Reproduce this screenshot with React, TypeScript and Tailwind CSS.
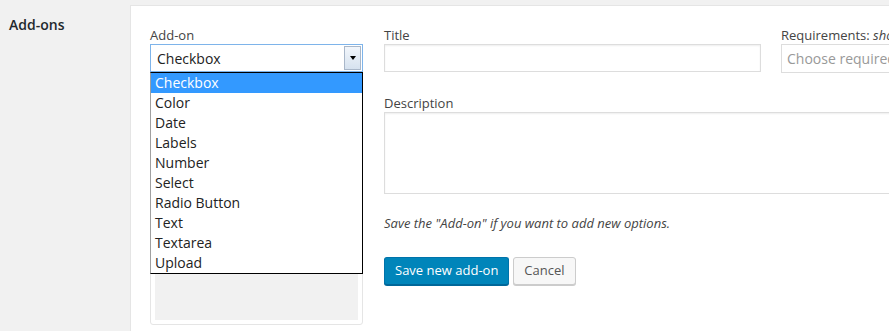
import { useState } from "react";

const addonTypes = [
  "Checkbox",
  "Color",
  "Date",
  "Labels",
  "Number",
  "Select",
  "Radio Button",
  "Text",
  "Textarea",
  "Upload",
];

export default function App() {
  const [selected, setSelected] = useState("Checkbox");

  return (
    <div className="w-[889px] h-[331px] overflow-hidden bg-[#f1f1f1] font-['Open_Sans',sans-serif] text-[13px] text-[#444]">
      <div className="flex h-full">
        {/* Section heading */}
        <div className="w-[130px] shrink-0 pl-[9px] pt-[15px]">
          <h2 className="text-[14px] font-semibold text-[#23282d] leading-[20px]">Add-ons</h2>
        </div>

        {/* Panel */}
        <div className="mt-[5px] w-[1000px] shrink-0 bg-white border-t border-l border-[#e5e5e5] pl-[19px] pt-[20px] flex gap-[21px]">
          {/* Add-on type column */}
          <div className="w-[213px] shrink-0 flex flex-col">
            <label className="leading-[18px] h-[18px]">Add-on</label>
            <div className="relative">
              <div className="h-[28px] border border-[#7eb4ea] bg-white flex items-center justify-between pl-[6px] pr-[1px]">
                <span className="text-[14px] text-[#222]">{selected}</span>
                <span className="w-[17px] h-[24px] border border-[#a9b7c9] bg-gradient-to-b from-[#f2f6fb] to-[#d6e2ef] flex items-center justify-center">
                  <span className="w-0 h-0 border-l-[3.5px] border-r-[3.5px] border-t-[4px] border-l-transparent border-r-transparent border-t-black" />
                </span>
              </div>

              {/* Open dropdown list */}
              <ul className="absolute left-0 top-[28px] z-10 w-[213px] bg-white border border-black border-l-[#a0a0a0]">
                {addonTypes.map((t) => (
                  <li
                    key={t}
                    onClick={() => setSelected(t)}
                    className={
                      t === selected
                        ? "h-[20px] leading-[20px] pl-[4px] text-[14px] bg-[#3399ff] text-white"
                        : "h-[20px] leading-[20px] pl-[4px] text-[14px] text-[#222]"
                    }
                  >
                    {t}
                  </li>
                ))}
              </ul>

              {/* preview box below the select */}
              <div className="h-[253px] border border-[#e5e5e5] rounded-[3px] p-[4px]">
                <div className="h-full bg-[#f1f1f1]" />
              </div>
            </div>
          </div>

          {/* Fields */}
          <div className="w-[700px] shrink-0 flex flex-col">
            <div className="flex gap-[20px]">
              <div className="w-[377px] shrink-0">
                <label className="block leading-[18px] h-[18px]">Title</label>
                <input className="block w-full h-[28px] border border-[#ddd] shadow-[inset_0_1px_2px_rgba(0,0,0,0.07)] outline-none px-2" />
              </div>
              <div className="flex-1">
                <label className="block leading-[18px] h-[18px] whitespace-nowrap">
                  Requirements: <em>show if</em>
                </label>
                <input
                  placeholder="Choose required..."
                  className="block w-full h-[29px] border border-[#ddd] outline-none px-[5px] text-[14px] placeholder:text-[#999]"
                />
              </div>
            </div>

            <label className="block leading-[18px] h-[18px] mt-[21px]">Description</label>
            <textarea className="block w-full h-[82px] border border-[#ddd] shadow-[inset_0_1px_2px_rgba(0,0,0,0.07)] outline-none resize-none" />

            <p className="italic mt-[20px] leading-[18px]">Save the "Add-on" if you want to add new options.</p>

            <div className="flex gap-[4px] mt-[25px]">
              <button className="h-[28px] px-[10px] rounded-[3px] bg-[#0085ba] border border-[#0073aa] border-b-[#006799] shadow-[0_1px_0_#006799] text-white text-[13px]">
                Save new add-on
              </button>
              <button className="h-[28px] px-[10px] rounded-[3px] bg-[#f7f7f7] border border-[#ccc] shadow-[0_1px_0_#ccc] text-[#555] text-[13px]">
                Cancel
              </button>
            </div>
          </div>
        </div>
      </div>
    </div>
  );
}
